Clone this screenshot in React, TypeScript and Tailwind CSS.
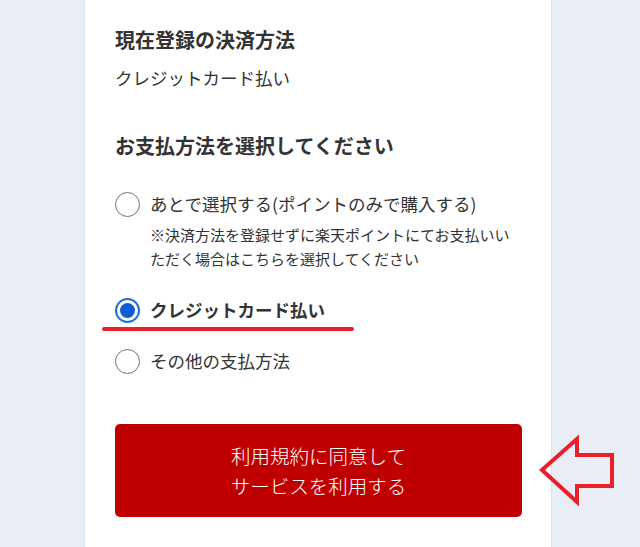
import React from "react";

function Radio({ checked }: { checked?: boolean }) {
  if (checked) {
    return (
      <span className="flex h-[25px] w-[25px] shrink-0 items-center justify-center rounded-full border-2 border-[#1a6fd6] bg-white">
        <span className="h-[15px] w-[15px] rounded-full bg-[#0d5fcf]" />
      </span>
    );
  }
  return <span className="h-[25px] w-[25px] shrink-0 rounded-full border-[1.5px] border-[#737373] bg-white" />;
}

export default function App() {
  return (
    <div
      className="relative h-[547px] w-[640px] overflow-hidden bg-[#e9eef6] text-[#333333]"
      style={{ fontFamily: '"Noto Sans CJK JP", "Noto Sans", sans-serif' }}
    >
      <div className="relative ml-[84px] h-full w-[468px] border-x border-[#dde2ea] bg-white pl-[30px] pr-[30px] pt-[25px]">
        <h2 className="text-[20px] font-bold leading-[30px]">現在登録の決済方法</h2>
        <p className="mt-[9px] text-[17.5px] leading-[28px]">クレジットカード払い</p>

        <h2 className="mt-[39px] text-[20px] font-bold leading-[30px]">お支払方法を選択してください</h2>

        <div className="mt-[29px] flex items-center gap-[10px]">
          <Radio />
          <span className="text-[17.5px] leading-[28px]">あとで選択する(ポイントのみで購入する)</span>
        </div>
        <p className="mt-[5px] pl-[35px] text-[15px] leading-[24px]">
          ※決済方法を登録せずに楽天ポイントにてお支払いい
          <br />
          ただく場合はこちらを選択してください
        </p>

        <div className="relative mt-[25px] flex items-center gap-[10px]">
          <Radio checked />
          <span className="text-[17.5px] font-bold leading-[28px]">クレジットカード払い</span>
          <span className="absolute left-[-13px] top-[31px] h-[4px] w-[252px] rounded-full bg-[#e8202a]" />
        </div>

        <div className="mt-[23px] flex items-center gap-[10px]">
          <Radio />
          <span className="text-[17.5px] leading-[28px]">その他の支払方法</span>
        </div>

        <button className="mt-[49px] flex h-[93px] w-[407px] flex-col items-center justify-center rounded-[5px] bg-[#bf0000] text-[19.5px] font-light leading-[30px] text-white">
          <span>利用規約に同意して</span>
          <span>サービスを利用する</span>
        </button>
      </div>

      <svg className="absolute left-0 top-0" width="640" height="547" viewBox="0 0 640 547">
        <polygon
          points="542,470 577,439 577,455 612,455 612,486 577,486 577,502"
          fill="none"
          stroke="#e8202a"
          strokeWidth="4"
          strokeLinejoin="miter"
        />
      </svg>
    </div>
  );
}
